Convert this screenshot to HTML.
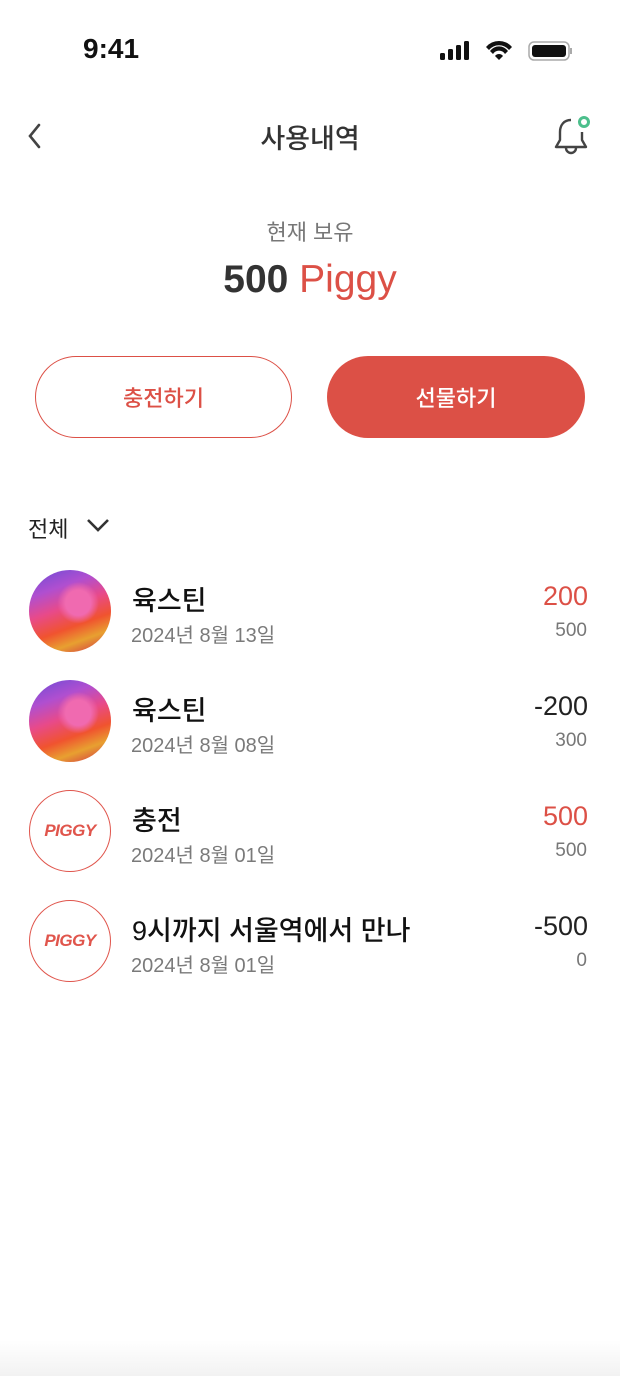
<!DOCTYPE html>
<html><head><meta charset="utf-8"><style>
*{margin:0;padding:0;box-sizing:border-box}
body{width:620px;height:1376px;background:#fff;position:relative;overflow:hidden;font-family:"Liberation Sans","Noto Sans CJK KR",sans-serif;}
.a{position:absolute}
.av{position:absolute;left:29px;width:82px;height:82px;border-radius:50%;overflow:hidden}
.img{background:radial-gradient(circle at 60% 40%,#f06ab0 0 18%,transparent 30%),linear-gradient(160deg,#6a4bd6 0%,#b04fd0 25%,#e84a8a 45%,#f0532f 65%,#e8a030 80%,#d02848 100%)}
.pg{border:1.5px solid #e0554c;background:#fff;display:flex;align-items:center;justify-content:center;color:#e0554c;font-style:italic;font-weight:900;font-size:17px;letter-spacing:-0.5px}
.t{position:absolute;left:132px;font-size:27px;font-weight:500;color:#111}
.d{position:absolute;left:131px;font-size:20px;color:#7a7a7a}
.v{position:absolute;right:32px;font-size:27px;font-weight:500;text-align:right}
.s{position:absolute;right:33px;font-size:19px;color:#777;text-align:right}
</style></head><body>
<div class="a" style="left:83px;top:33px;font-size:28px;font-weight:700;color:#111">9:41</div>
<svg class="a" style="left:438px;top:40px" width="136" height="22" viewBox="0 0 136 22">
<rect x="2" y="13" width="5" height="7" rx="1.5" fill="#111"/><rect x="10" y="9" width="5" height="11" rx="1.5" fill="#111"/><rect x="18" y="5" width="5" height="15" rx="1.5" fill="#111"/><rect x="26" y="1" width="5" height="19" rx="1.5" fill="#111"/>
<path d="M48 7a17 17 0 0 1 26 0l-3 3a13 13 0 0 0-20 0z M52 11a11 11 0 0 1 18 0l-3 3a7 7 0 0 0-12 0z M57 16a5 5 0 0 1 8 0l-4 4z" fill="#111"/>
<rect x="91" y="2" width="40" height="18" rx="5" fill="none" stroke="#aaa" stroke-width="1.5"/><rect x="94" y="5" width="34" height="12" rx="3" fill="#111"/><rect x="132" y="8" width="2" height="6" fill="#aaa"/></svg>
<svg class="a" style="left:24px;top:122px" width="20" height="28"><path d="M15 3 6 14l9 11" fill="none" stroke="#444" stroke-width="2.6" stroke-linecap="round"/></svg>
<div class="a" style="left:0;width:620px;top:117px;text-align:center;font-size:27px;font-weight:500;color:#333">사용내역</div>
<svg class="a" style="left:548px;top:112px" width="46" height="46" viewBox="0 0 46 46"><path d="M23 8c-7 0-11 5-11 12v8l-4 7h30l-4-7v-8" fill="none" stroke="#444" stroke-width="2.4" stroke-linejoin="round"/><path d="M18 36a5 5 0 0 0 10 0" fill="none" stroke="#444" stroke-width="2.4"/><circle cx="36" cy="10" r="4.5" fill="none" stroke="#4cbf8c" stroke-width="3"/></svg>
<div class="a" style="left:0;width:620px;top:215px;text-align:center;font-size:22px;color:#777">현재 보유</div>
<div class="a" style="left:0;width:620px;top:258px;text-align:center;font-size:39px;font-weight:700;color:#333">500 <span style="color:#dc5046;font-weight:400">Piggy</span></div>
<div class="a" style="left:35px;top:356px;width:257px;height:82px;border:1.5px solid #dc5046;border-radius:41px;color:#dc5046;font-size:22px;font-weight:500;display:flex;align-items:center;justify-content:center">충전하기</div>
<div class="a" style="left:327px;top:356px;width:258px;height:82px;background:#dc5046;border-radius:41px;color:#fff;font-size:22px;font-weight:500;display:flex;align-items:center;justify-content:center">선물하기</div>
<div class="a" style="left:28px;top:512px;font-size:22px;color:#222">전체</div>
<svg class="a" style="left:86px;top:517px" width="24" height="16"><path d="M2 3l10 10 10-10" fill="none" stroke="#333" stroke-width="2.6"/></svg>

<div class="av img" style="top:570px"></div>
<div class="t" style="top:579px">육스틴</div><div class="d" style="top:619px">2024년 8월 13일</div>
<div class="v" style="top:581px;color:#dc5046">200</div><div class="s" style="top:620px">500</div>

<div class="av img" style="top:680px"></div>
<div class="t" style="top:689px">육스틴</div><div class="d" style="top:729px">2024년 8월 08일</div>
<div class="v" style="top:691px;color:#222">-200</div><div class="s" style="top:730px">300</div>

<div class="av pg" style="top:790px">PIGGY</div>
<div class="t" style="top:799px">충전</div><div class="d" style="top:839px">2024년 8월 01일</div>
<div class="v" style="top:801px;color:#dc5046">500</div><div class="s" style="top:840px">500</div>

<div class="av pg" style="top:900px">PIGGY</div>
<div class="t" style="top:909px">9시까지 서울역에서 만나</div><div class="d" style="top:949px">2024년 8월 01일</div>
<div class="v" style="top:911px;color:#222">-500</div><div class="s" style="top:950px">0</div>
<div class="a" style="left:0;top:1340px;width:620px;height:36px;background:linear-gradient(#fff,#f2f2f2)"></div>
</body></html>
